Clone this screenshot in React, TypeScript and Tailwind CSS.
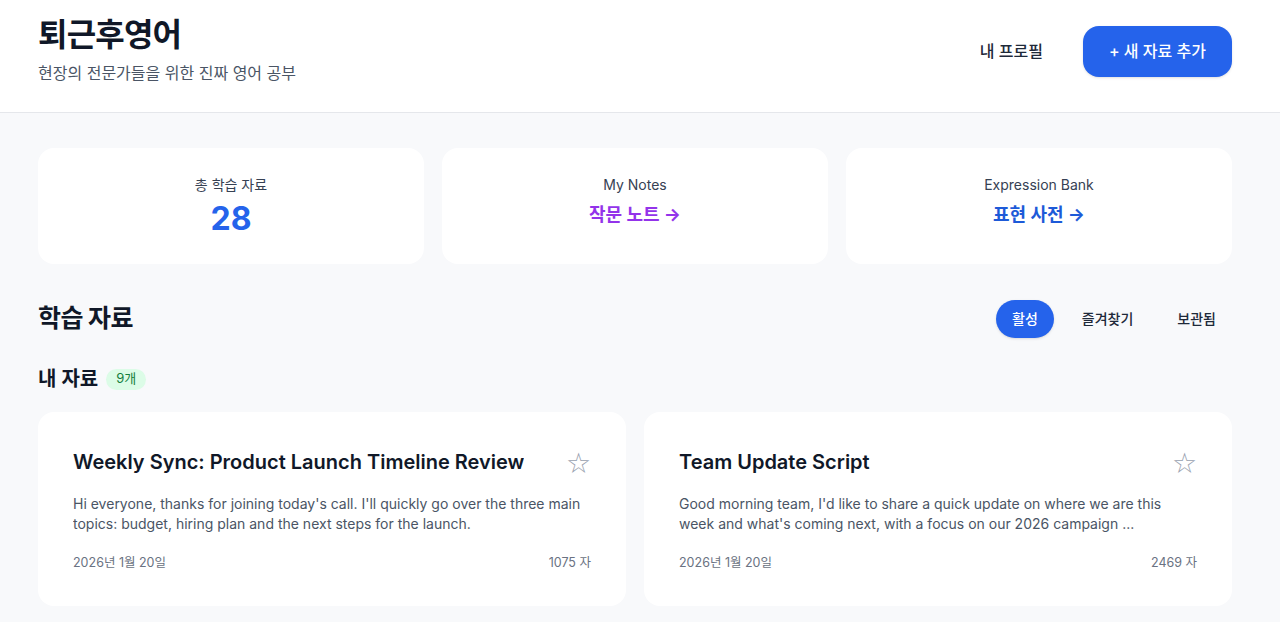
import { useState } from "react";

const materials = [
  {
    title: "Weekly Sync: Product Launch Timeline Review",
    body: "Hi everyone, thanks for joining today's call. I'll quickly go over the three main topics: budget, hiring plan and the next steps for the launch.",
    date: "2026년 1월 20일",
    chars: 1075,
  },
  {
    title: "Team Update Script",
    body: "Good morning team, I'd like to share a quick update on where we are this week and what's coming next, with a focus on our 2026 campaign ...",
    date: "2026년 1월 20일",
    chars: 2469,
  },
];

export default function App() {
  const [tab, setTab] = useState("활성");
  const tabs = ["활성", "즐겨찾기", "보관됨"];

  return (
    <div
      className="min-h-screen bg-[#f8f9fb] text-gray-900"
      style={{ fontFamily: 'Inter, "Noto Sans CJK KR", sans-serif' }}
    >
      {/* Header */}
      <header className="bg-white border-b border-gray-200">
        <div className="pl-[38px] pr-[48px] pt-[17px] pb-[27px] flex items-center justify-between">
          <div>
            <h1 className="text-[32px] font-bold tracking-tight text-gray-900 leading-9">퇴근후영어</h1>
            <p className="mt-2 text-base text-gray-600">현장의 전문가들을 위한 진짜 영어 공부</p>
          </div>
          <div className="flex items-center gap-10">
            <button className="text-base font-medium text-gray-800">내 프로필</button>
            <button className="h-[51px] px-[26px] rounded-2xl bg-[#2563eb] text-white text-base font-medium shadow-sm">
              + 새 자료 추가
            </button>
          </div>
        </div>
      </header>

      <main className="pl-[38px] pr-[48px] pt-[35px]">
        {/* Stats */}
        <div className="grid grid-cols-3 gap-[18px]">
          <div className="bg-white rounded-2xl h-[116px] flex flex-col items-center pt-[27px]">
            <span className="text-sm text-gray-700">총 학습 자료</span>
            <span className="text-[32px] leading-9 font-bold text-[#2563eb] mt-[6px]">28</span>
          </div>
          <div className="bg-white rounded-2xl h-[116px] flex flex-col items-center pt-[27px]">
            <span className="text-sm text-gray-700">My Notes</span>
            <span className="text-lg font-bold text-[#9333ea] mt-1.5">작문 노트 →</span>
          </div>
          <div className="bg-white rounded-2xl h-[116px] flex flex-col items-center pt-[27px]">
            <span className="text-sm text-gray-700">Expression Bank</span>
            <span className="text-lg font-bold text-[#1d5ad8] mt-1.5">표현 사전 →</span>
          </div>
        </div>

        {/* Section heading */}
        <div className="mt-9 flex items-center justify-between">
          <h2 className="text-[25px] font-bold tracking-tight">학습 자료</h2>
          <div className="flex items-center gap-3">
            {tabs.map((t) => (
              <button
                key={t}
                onClick={() => setTab(t)}
                className={`h-[38px] px-4 rounded-full text-sm font-medium ${
                  tab === t ? "bg-[#2563eb] text-white shadow-sm" : "text-gray-800"
                }`}
              >
                {t}
              </button>
            ))}
          </div>
        </div>

        {/* My materials */}
        <div className="mt-[27px] flex items-center gap-2 h-7">
          <h3 className="text-xl font-semibold">내 자료</h3>
          <span className="px-2.5 h-[21px] flex items-center rounded-full bg-[#dcfce7] text-[#15803d] text-[13px]">9개</span>
        </div>

        <div className="mt-[19px] grid grid-cols-2 gap-[18px] pb-10">
          {materials.map((m) => (
            <div key={m.title} className="bg-white rounded-2xl h-[194px] flex flex-col px-[35px] pt-9 pb-[33px]">
              <div className="flex items-start justify-between gap-4">
                <h4 className="text-xl font-semibold truncate leading-7">{m.title}</h4>
                <span
                  className="text-[28px] leading-7 text-gray-400 shrink-0 mt-[2px]"
                  style={{ fontFamily: '"DejaVu Sans", sans-serif' }}
                >
                  ☆
                </span>
              </div>
              <p className="mt-[16px] text-sm leading-5 text-gray-600 line-clamp-2">{m.body}</p>
              <div className="mt-auto flex items-center justify-between text-[12.5px] text-gray-500">
                <span>{m.date}</span>
                <span>{m.chars} 자</span>
              </div>
            </div>
          ))}
        </div>
      </main>
    </div>
  );
}
